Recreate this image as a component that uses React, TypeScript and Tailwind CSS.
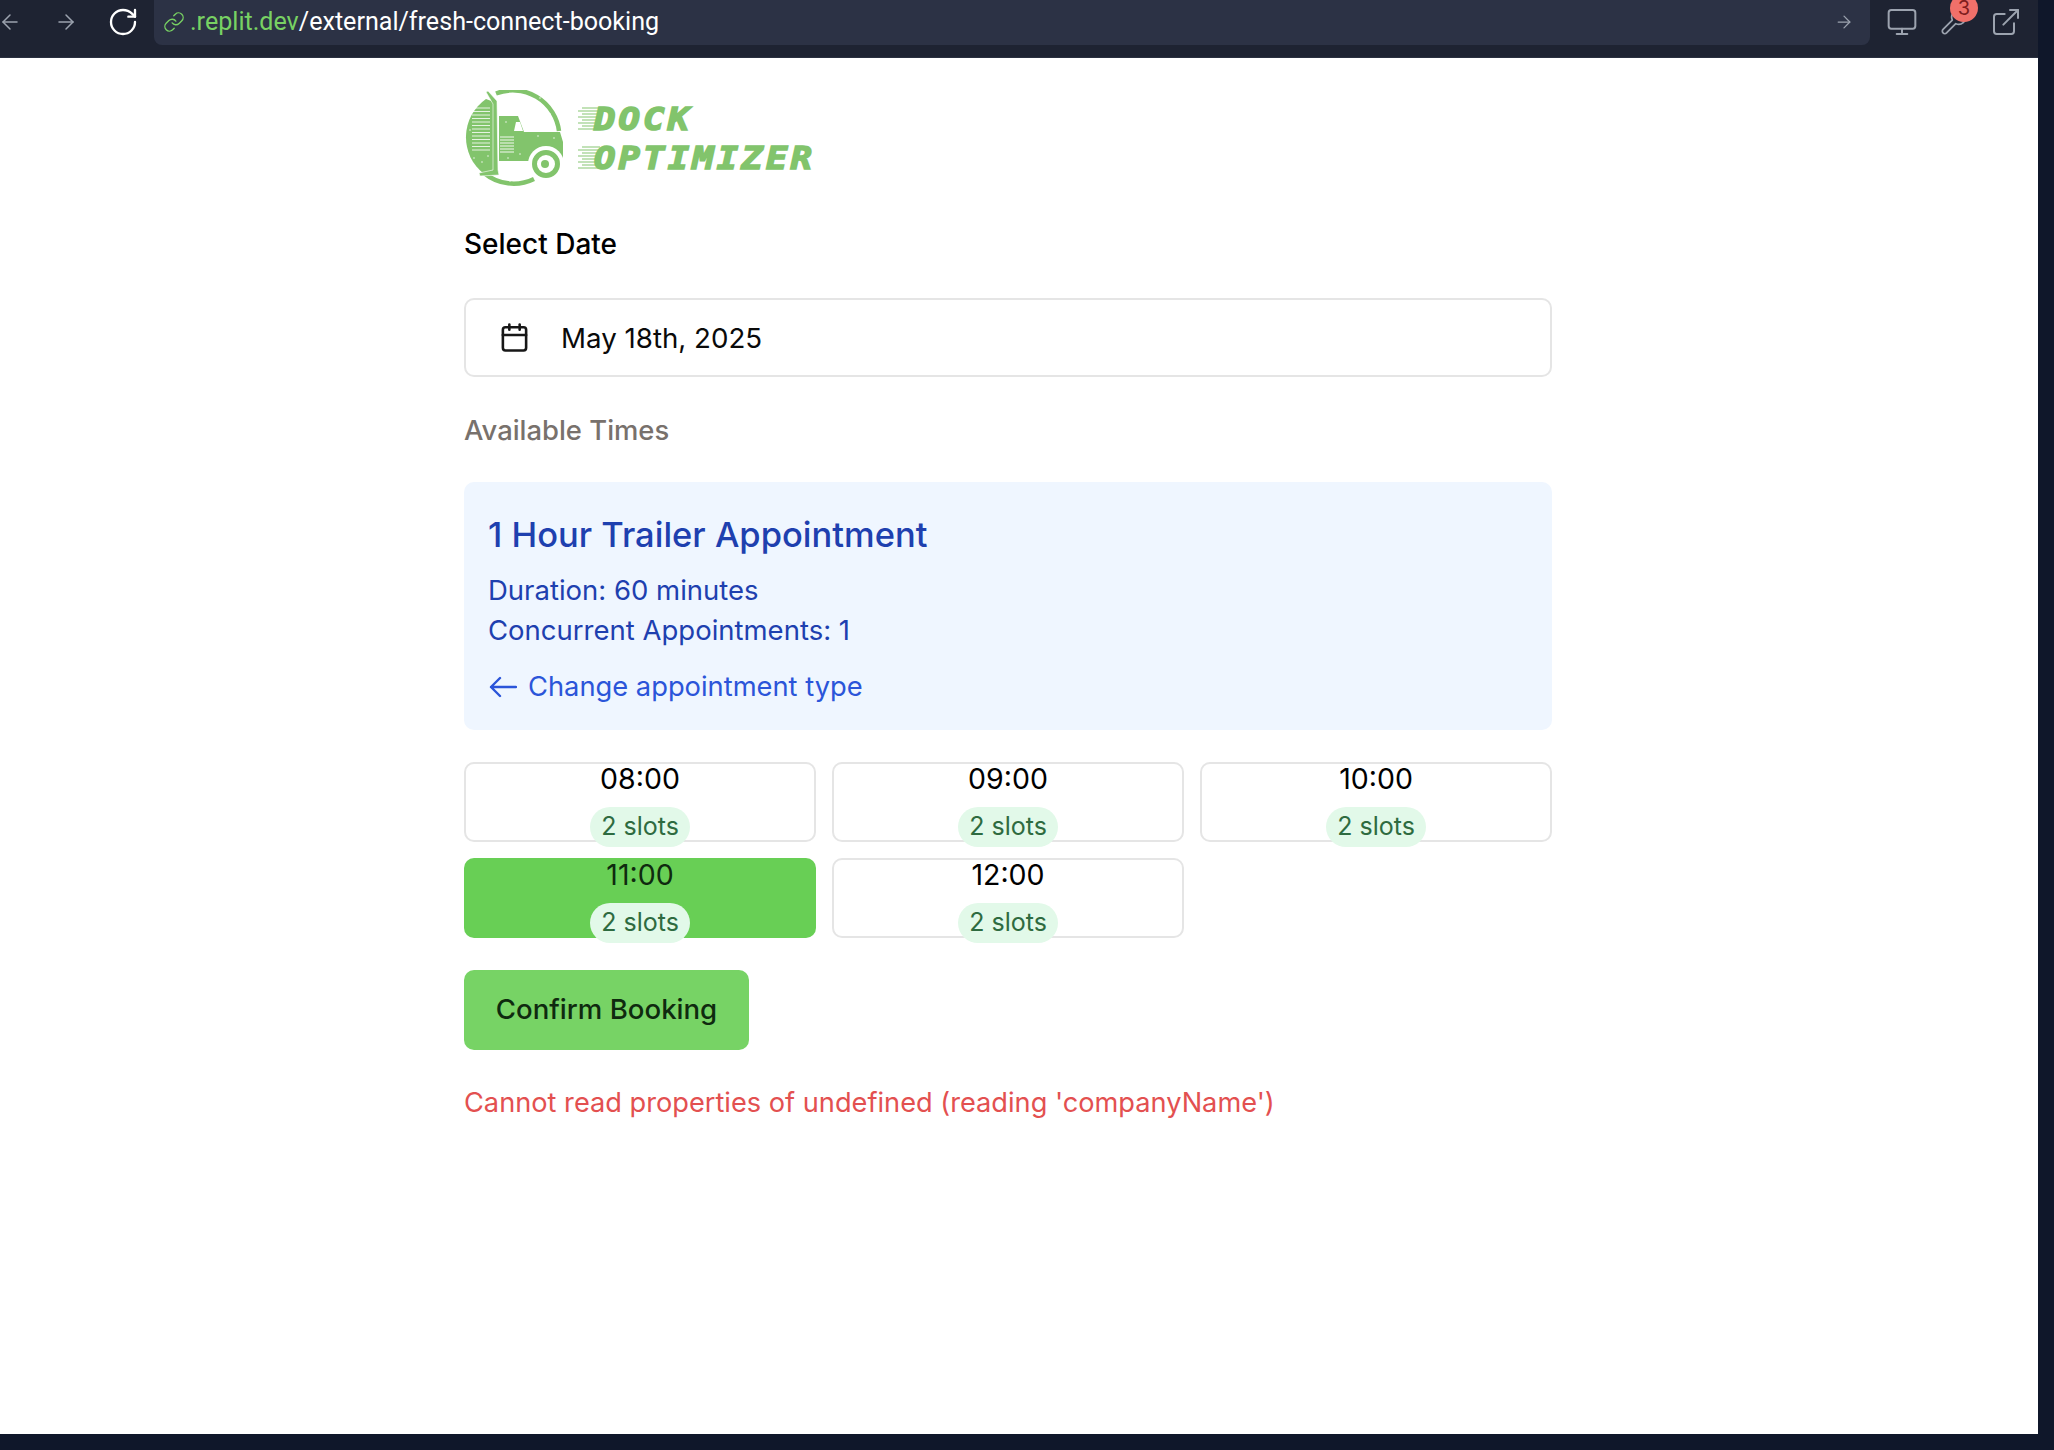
import { ArrowRight, ArrowLeft, Calendar, ExternalLink, Link, Monitor, RotateCw, Wrench } from 'lucide-react';

const GREEN = '#82c46c';
const SLOTS = ['08:00', '09:00', '10:00', '11:00', '12:00'];

function SpeedLines({ top }: { top: number }) {
  // streaks trailing the logo lettering, alternating in length
  const rows = [0, 3, 6, 9, 12, 15, 18, 21];
  return (
    <g stroke={GREEN} strokeWidth="1.2" opacity="0.8">
      {rows.map((y, i) => (
        <line key={y} x1={i % 2 ? 128 : 132} x2="150" y1={top + y} y2={top + y} />
      ))}
    </g>
  );
}

function Logo() {
  const grille = [57, 60, 63, 66, 69, 72];
  const stripes = [28, 31.5, 35, 38.5, 42, 45.5, 49, 52.5, 56, 59.5, 63, 66.5, 70];
  const specks = [[20, 50], [24, 78], [32, 82], [38, 76], [58, 78], [70, 74], [88, 56], [104, 58], [56, 42], [90, 18], [100, 34], [60, 101]];

  return (
    <svg viewBox="14 10 356 100" width="356" height="100" className="block">
      <path d="M46 13.5 A46.5 46.5 0 0 1 109 51" fill="none" stroke={GREEN} strokeWidth="4.5" />
      <path d="M84 99 A46.5 46.5 0 0 1 34 93" fill="none" stroke={GREEN} strokeWidth="4.5" />
      <path d="M36 19 A46.5 46.5 0 0 0 34 94 L44 90 L44 22 Z" fill={GREEN} />
      {stripes.map((y) => (
        <line key={y} x1="22" x2="40" y1={y} y2={y} stroke="#fff" strokeWidth="0.8" />
      ))}
      <path d="M36 12 L38 11 L47 21 L48 90 L49 95 L30 96 L29 93 L43 90 L43 24 Z" fill={GREEN} stroke="#fff" strokeWidth="0.6" />
      <path d="M49 36 L68 36 L74 52 L110 52 L113 62 L113 81 L76 81 L49 81 Z" fill={GREEN} />
      <path d="M66 42 L70 42 L73 51 L64 51 Z" fill="#fff" />
      {grille.map((y) => (
        <line key={y} x1="50" x2="64" y1={y} y2={y} stroke="#fff" strokeWidth="0.9" />
      ))}
      <circle cx="96" cy="84" r="18" fill="#fff" />
      <circle cx="96" cy="84" r="11.5" fill="none" stroke={GREEN} strokeWidth="5" />
      <circle cx="95" cy="84" r="4" fill={GREEN} />
      {specks.map(([x, y]) => (
        <circle key={`${x}-${y}`} cx={x} cy={y} r="0.7" fill="#fff" />
      ))}
      <SpeedLines top={28} />
      <SpeedLines top={67} />
      <g fill={GREEN} stroke={GREEN} strokeWidth="1.5" fontFamily="'DejaVu Sans Mono', monospace" fontWeight="700" fontStyle="italic" fontSize="31" letterSpacing="2.7">
        <text transform="translate(144 50) scale(1.15 1)">DOCK</text>
        <text transform="translate(144 89) scale(1.15 1)">OPTIMIZER</text>
      </g>
    </svg>
  );
}

function BrowserBar() {
  return (
    <div className="relative flex h-[58px] w-full items-start overflow-hidden border-b border-[#2a3040] bg-[#1e2332] text-[#9ca3af]">
      <div className="flex h-[43px] w-[154px] shrink-0 items-center">
        <ArrowLeft className="-ml-[2px] size-6" strokeWidth={1.5} />
        <ArrowRight className="ml-[32px] size-6" strokeWidth={1.5} />
        <RotateCw className="ml-[29px] size-[32px] text-white" strokeWidth={1.75} />
      </div>
      <div className="flex h-[45px] w-[1716px] items-center rounded-b-lg bg-[#2c3245] pb-[2px] pl-[9px] pr-[16px]">
        <Link className="size-[22px] text-[#78d163]" strokeWidth={1.5} />
        <span className="ml-[5px] font-['Roboto',sans-serif] text-[25.1px] text-white">
          <span className="text-[#78d163]">.replit.dev</span>/external/fresh-connect-booking
        </span>
        <ArrowRight className="ml-auto size-[20px]" strokeWidth={1.5} />
      </div>
      <div className="flex h-[43px] items-center pl-[16px]">
        <Monitor className="size-8" strokeWidth={1.5} />
        <Wrench className="ml-[22px] size-7" strokeWidth={1.5} />
        <ExternalLink className="ml-[22px] size-8" strokeWidth={1.5} />
      </div>
      <span className="absolute left-[1950px] top-[-6px] flex size-[28px] items-center justify-center rounded-full bg-[#f0706a] text-[20px] leading-none text-[#7f1d1d]">
        3
      </span>
    </div>
  );
}

function SlotButton({ time, selected }: { time: string; selected?: boolean }) {
  return (
    <button
      className={
        selected
          ? 'flex h-[80px] flex-col items-center rounded-[10px] bg-[#68cf55] text-[#0f2a0f]'
          : 'flex h-[80px] flex-col items-center rounded-[10px] border-2 border-[#e5e5e5] bg-white text-black'
      }
    >
      <span className={selected ? 'mt-[1px] text-[28.5px] leading-[32px]' : 'mt-[-1px] text-[28.5px] leading-[32px]'}>{time}</span>
      <span className="mt-[12px] flex h-[40px] w-[100px] shrink-0 items-center justify-center rounded-full bg-[#e2f9e9] text-[25px] text-[#2e6b40]">
        2 slots
      </span>
    </button>
  );
}

export default function App() {
  return (
    <div className="h-[1450px] w-[2054px] overflow-hidden bg-[#0f172a] pb-4 pr-4 font-['Inter',sans-serif]">
      <div className="h-full w-full bg-white">
        <BrowserBar />
        <main className="ml-[464px] w-[1088px] pt-[32px]">
          <Logo />
          <h2 className="mt-[34px] text-[28px] font-medium leading-[40px] text-black">Select Date</h2>
          <div className="mt-[34px] flex h-[79px] items-center rounded-[10px] border-2 border-[#e5e5e5] bg-white pl-[33px]">
            <Calendar className="size-[31px] text-[#171717]" strokeWidth={2} />
            <span className="ml-[31px] pt-[2px] text-[27.7px] text-[#0a0a0a]">May 18th, 2025</span>
          </div>
          <h3 className="mt-[33px] text-[27.4px] font-medium leading-[40px] text-[#78716c]">Available Times</h3>
          <section className="mt-[32px] h-[248px] rounded-[10px] bg-[#eff6ff] pl-[24px] pt-[28px]">
            <h4 className="text-[34.5px] font-medium leading-[50px] text-[#1e40af]">1 Hour Trailer Appointment</h4>
            <p className="mt-[10px] text-[27.5px] leading-[40px] text-[#1e40af]">Duration: 60 minutes</p>
            <p className="text-[27.5px] leading-[40px] text-[#1e40af]">Concurrent Appointments: 1</p>
            <a className="mt-[17px] flex items-center text-[27.3px] leading-[40px] text-[#2b55d9]">
              <svg viewBox="0 0 28 24" className="ml-[1px] h-[24px] w-[28px]" fill="none" stroke="currentColor" strokeWidth="2.4" strokeLinecap="round" strokeLinejoin="round">
                <path d="M27 12H2M11 3L2 12L11 21" />
              </svg>
              <span className="ml-[11px]">Change appointment type</span>
            </a>
          </section>
          <div className="mt-[32px] grid grid-cols-3 gap-4">
            {SLOTS.map((time) => (
              <SlotButton key={time} time={time} selected={time === '11:00'} />
            ))}
          </div>
          <button className="mt-[32px] flex h-[80px] w-[285px] items-center justify-center rounded-[10px] bg-[#77d365] text-[27.6px] font-medium text-[#0f2a0f]">
            Confirm Booking
          </button>
          <p className="mt-[33px] text-[27.2px] leading-[40px] text-[#e35050]">Cannot read properties of undefined (reading 'companyName')</p>
        </main>
      </div>
    </div>
  );
}
